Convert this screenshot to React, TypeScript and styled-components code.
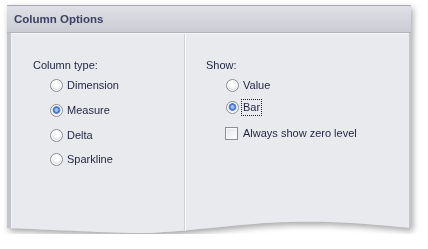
import { createGlobalStyle } from 'styled-components';
import styled from 'styled-components';

const GlobalStyle = createGlobalStyle`
  body {
    margin: 0;
    background: #ffffff;
    font-family: 'Liberation Sans', Arial, sans-serif;
  }
`;

const Stage = styled.div`
  padding: 5px 0 0 7px;
`;

const Shadow = styled.div`
  width: 408px;
  filter: drop-shadow(2px 3px 3px rgba(0, 0, 0, 0.35));
`;

const Window = styled.div`
  width: 404px;
  height: 229px;
  display: flex;
  flex-direction: column;
  background: #c3c4cc;
  border-top: 1px solid #a9aab2;
  box-sizing: border-box;
  clip-path: path('M0 0 H404 V223 C 360 219, 330 216, 283 217 C 230 218, 170 229, 126 228 C 80 227, 30 224, 0 223 Z');
`;

const TitleBar = styled.div`
  height: 26px;
  flex: none;
  display: flex;
  align-items: center;
  padding-left: 7px;
  background: linear-gradient(#dfe0e5, #cbccd3);
  border-bottom: 1px solid #b2b3bb;
  font-size: 11.5px;
  font-weight: bold;
  color: #3d4163;
`;

const Body = styled.div`
  flex: 1;
  display: flex;
  margin: 0 2px 0 4px;
  background: #e9eaee;
  border-top: 1px solid #f6f6f8;
  border-left: 1px solid #f3f3f5;
`;

const Column = styled.div<{ $width?: number; $divider?: boolean }>`
  ${(p) => (p.$width ? `width: ${p.$width}px;` : 'flex: 1;')}
  flex-shrink: 0;
  box-sizing: border-box;
  padding: 24px 0 0 21px;
  ${(p) => (p.$divider ? 'border-left: 1px solid #d0d1d7; box-shadow: inset 1px 0 #fbfbfc;' : '')}
  display: flex;
  flex-direction: column;
`;

const Caption = styled.div`
  font-size: 11px;
  line-height: 14px;
  color: #1f2340;
`;

const Option = styled.label<{ $indent: number; $top: number }>`
  display: flex;
  align-items: center;
  gap: 4px;
  margin: ${(p) => p.$top}px 0 0 ${(p) => p.$indent}px;
  height: 15px;
  font-size: 11px;
  color: #1f2340;
`;

const Radio = styled.span<{ $checked?: boolean }>`
  width: 13px;
  height: 13px;
  box-sizing: border-box;
  border-radius: 50%;
  border: 1px solid #8d8e96;
  background: ${(p) =>
    p.$checked
      ? 'radial-gradient(circle at 50% 45%, #9fc0f2 0 1.5px, #3b6fcf 2.5px, #5d86d6 3.5px, #dfe4ef 4.2px, #f7f7f9 6px)'
      : 'radial-gradient(circle at 50% 40%, #ffffff 0 2px, #f0f0f3 4px, #d6d7dc 6px)'};
  box-shadow: inset 0 0 0 1px #ffffff;
  flex: none;
`;

const Check = styled.span`
  width: 13px;
  height: 13px;
  box-sizing: border-box;
  border: 1px solid #8d8e96;
  background: linear-gradient(135deg, #e4e5ea, #ffffff);
  box-shadow: inset 0 0 0 1px #f8f8fa;
  flex: none;
  margin-right: 1px;
`;

const Text = styled.span<{ $focused?: boolean }>`
  line-height: 13px;
  padding: 1px;
  border: 1px dotted ${(p) => (p.$focused ? '#202020' : 'transparent')};
  margin-left: -2px;
`;

export default function App() {
  return (
    <>
      <GlobalStyle />
      <Stage>
        <Shadow>
          <Window>
            <TitleBar>Column Options</TitleBar>
            <Body>
              <Column $width={172}>
                <Caption>Column type:</Caption>
                <Option $indent={17} $top={6}>
                  <Radio />
                  <Text>Dimension</Text>
                </Option>
                <Option $indent={17} $top={10}>
                  <Radio $checked />
                  <Text>Measure</Text>
                </Option>
                <Option $indent={17} $top={10}>
                  <Radio />
                  <Text>Delta</Text>
                </Option>
                <Option $indent={17} $top={9}>
                  <Radio />
                  <Text>Sparkline</Text>
                </Option>
              </Column>
              <Column $divider>
                <Caption>Show:</Caption>
                <Option $indent={20} $top={6}>
                  <Radio />
                  <Text>Value</Text>
                </Option>
                <Option $indent={20} $top={7}>
                  <Radio $checked />
                  <Text $focused>Bar</Text>
                </Option>
                <Option $indent={19} $top={11}>
                  <Check />
                  <Text>Always show zero level</Text>
                </Option>
              </Column>
            </Body>
          </Window>
        </Shadow>
      </Stage>
    </>
  );
}
